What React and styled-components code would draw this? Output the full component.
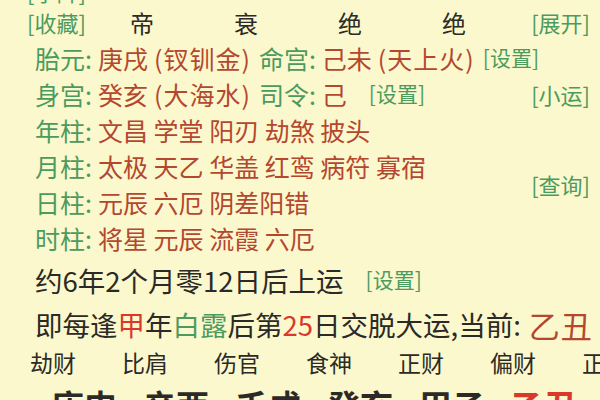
import React from 'react';
import styled, { createGlobalStyle } from 'styled-components';

const GlobalStyle = createGlobalStyle`
  html, body {
    margin: 0;
    padding: 0;
    background: #fbf8cd;
    overflow: hidden;
  }
  body {
    font-family: "Noto Sans CJK SC", "Noto Sans", sans-serif;
  }
`;

const Page = styled.div`
  width: 600px;
  height: 400px;
  overflow: hidden;
  background: #fbf8cd;
  color: #2b2a26;
`;

const Inner = styled.div`
  margin-top: -30px;
  padding-right: 10px;
  display: flex;
  flex-direction: column;
`;

const Row = styled.div`
  display: flex;
  align-items: ${p => p.align || 'center'};
  height: ${p => p.h || 36}px;
  padding-left: ${p => (p.pl === undefined ? 35 : p.pl)}px;
  font-size: ${p => p.fs || 25}px;
  white-space: nowrap;
`;

const Green = styled.span`
  color: #4c9b5e;
`;

const Red = styled.span`
  color: ${p => (p.bright ? '#d8392b' : '#b4472f')};
  font-size: ${p => (p.fs ? `${p.fs}px` : 'inherit')};
  letter-spacing: ${p => p.ls || 0}px;
`;

const Paren = styled.span`
  margin-left: 6px;
  letter-spacing: 1px;
`;

const Link = styled.span`
  color: #4c9b5e;
  font-size: ${p => p.fs || 21}px;
  margin-left: ${p => p.ml || 0}px;
  line-height: 1.2;
`;

const RightLink = styled(Link)`
  margin-left: auto;
`;

const Label = styled.span`
  color: #4c9b5e;
  margin-right: 6px;
`;

const Gap = styled.span`
  display: inline-block;
  width: ${p => p.w || 8}px;
`;

const Shen = styled.span`
  width: 104px;
  text-align: center;
  font-size: 24px;
  color: #2b2a26;
`;

const Split = styled.div`
  display: flex;
  align-items: center;
`;

const Col = styled.div`
  display: flex;
  flex-direction: column;
`;

const Grid = styled.div`
  display: grid;
  grid-template-columns: repeat(7, 92px);
  height: ${p => p.h}px;
  align-items: ${p => p.align || 'center'};
  padding-left: ${p => p.pl}px;
  font-size: ${p => p.fs}px;
  font-weight: ${p => p.fw || 400};
  line-height: 1.2;
  white-space: nowrap;
`;

const Cell = styled.span`
  color: ${p => (p.hot ? '#d8392b' : '#2b2a26')};
`;

const shensha = [
  ['年柱', '文昌 学堂 阳刃 劫煞 披头'],
  ['月柱', '太极 天乙 华盖 红鸾 病符 寡宿'],
  ['日柱', '元辰 六厄 阴差阳错'],
  ['时柱', '将星 元辰 流霞 六厄'],
];

const shiShen = ['劫财', '比肩', '伤官', '食神', '正财', '偏财', '正官'];
const dayun = ['庚申', '辛酉', '壬戌', '癸亥', '甲子', '乙丑', '丙寅'];

const ShenshaRow = ({ label, text }) => (
  <Row>
    <Label>{label}:</Label>
    <Red>{text}</Red>
  </Row>
);

const NaYin = ({ gz, ny }) => (
  <Red>
    {gz}
    <Paren>({ny})</Paren>
  </Red>
);

export default function App() {
  return (
    <Page>
      <GlobalStyle />
      <Inner>
        <Row h={34} pl={27} align="flex-end">
          <Link fs={22}>[字阵]</Link>
        </Row>
        <Row h={36} pl={27}>
          <Link fs={22}>[收藏]</Link>
          <Gap w={4} />
          <Shen>帝</Shen>
          <Shen>衰</Shen>
          <Shen>绝</Shen>
          <Shen>绝</Shen>
          <RightLink fs={22}>[展开]</RightLink>
        </Row>
        <Row>
          <Label>胎元:</Label>
          <NaYin gz="庚戌" ny="钗钏金" />
          <Gap w={8} />
          <Label>命宫:</Label>
          <NaYin gz="己未" ny="天上火" />
          <Link fs={21} ml={8}>[设置]</Link>
        </Row>
        <Row>
          <Label>身宫:</Label>
          <NaYin gz="癸亥" ny="大海水" />
          <Gap w={8} />
          <Label>司令:</Label>
          <Red>己</Red>
          <Link fs={21} ml={22}>[设置]</Link>
          <RightLink fs={22}>[小运]</RightLink>
        </Row>
        <ShenshaRow label={shensha[0][0]} text={shensha[0][1]} />
        <Split>
          <Col>
            <ShenshaRow label={shensha[1][0]} text={shensha[1][1]} />
            <ShenshaRow label={shensha[2][0]} text={shensha[2][1]} />
          </Col>
          <RightLink fs={22}>[查询]</RightLink>
        </Split>
        <ShenshaRow label={shensha[3][0]} text={shensha[3][1]} />
        <Row h={48} fs={27.5}>
          <span>约6年2个月零12日后上运</span>
          <Link fs={21} ml={22}>[设置]</Link>
        </Row>
        <Row h={40} fs={27.5}>
          <span>
            即每逢<Red bright>甲</Red>年<Green>白露</Green>后第<Red bright>25</Red>日交脱大运,当前:
          </span>
          <Red fs={31} ls={1}>&nbsp;乙丑</Red>
        </Row>
        <Grid h={38} pl={30} fs={23}>
          {shiShen.map((s, i) => (
            <Cell key={i}>{s}</Cell>
          ))}
        </Grid>
        <Grid h={44} pl={25} fs={33} fw={700} align="end">
          {dayun.map((s, i) => (
            <Cell key={i} hot={i === 5}>{s}</Cell>
          ))}
        </Grid>
      </Inner>
    </Page>
  );
}
